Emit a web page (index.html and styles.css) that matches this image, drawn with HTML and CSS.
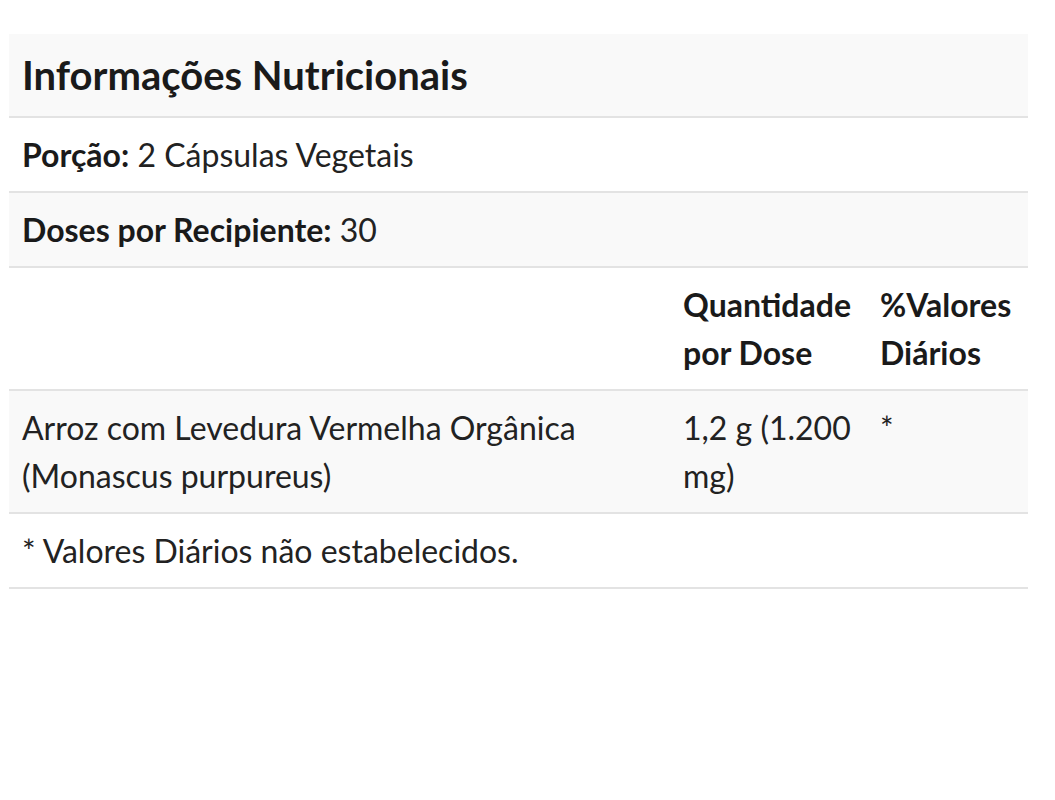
FILE: index.html
```html
<!DOCTYPE html>
<html lang="pt-BR">
<head>
    <meta charset="UTF-8">
    <meta name="viewport" content="width=device-width, initial-scale=1.0">
    <title>Informações Nutricionais</title>
    <link rel="stylesheet" href="styles.css">
</head>
<body>
    <div class="container">
        <table class="nutrition">
            <tr class="shaded">
                <th colspan="3" class="title">Informações Nutricionais</th>
            </tr>
            <tr>
                <td colspan="3"><strong>Porção:</strong> 2 Cápsulas Vegetais</td>
            </tr>
            <tr class="shaded">
                <td colspan="3"><strong>Doses por Recipiente:</strong> 30</td>
            </tr>
            <tr>
                <td class="col-name"></td>
                <td class="col-amount"><strong>Quantidade por Dose</strong></td>
                <td class="col-dv"><strong>%Valores Diários</strong></td>
            </tr>
            <tr class="shaded">
                <td>Arroz com Levedura Vermelha Orgânica (Monascus purpureus)</td>
                <td>1,2 g (1.200 mg)</td>
                <td>*</td>
            </tr>
            <tr>
                <td colspan="3">* Valores Diários não estabelecidos.</td>
            </tr>
        </table>
    </div>
</body>
</html>
```

FILE: styles.css
```css
body {
    margin: 0;
    padding: 0;
    background: #fff;
    font-family: Lato, "Open Sans", sans-serif;
    color: #222;
}
.container {
    padding: 34px 27px 0 9px;
}
.nutrition {
    width: 100%;
    border-collapse: collapse;
    font-size: 32px;
    line-height: 48px;
}
.nutrition th,
.nutrition td {
    text-align: left;
    vertical-align: top;
    padding: 13px 13px 12px;
    border-bottom: 2px solid #e3e3e3;
}
.nutrition strong {
    font-weight: 700;
    color: #1a1a1a;
}
.nutrition .title {
    font-size: 40px;
    font-weight: 700;
    line-height: 57px;
    color: #1a1a1a;
}
.shaded {
    background: #f9f9f9;
}
.col-amount {
    width: 171px;
}
.col-dv {
    width: 135px;
}
```
